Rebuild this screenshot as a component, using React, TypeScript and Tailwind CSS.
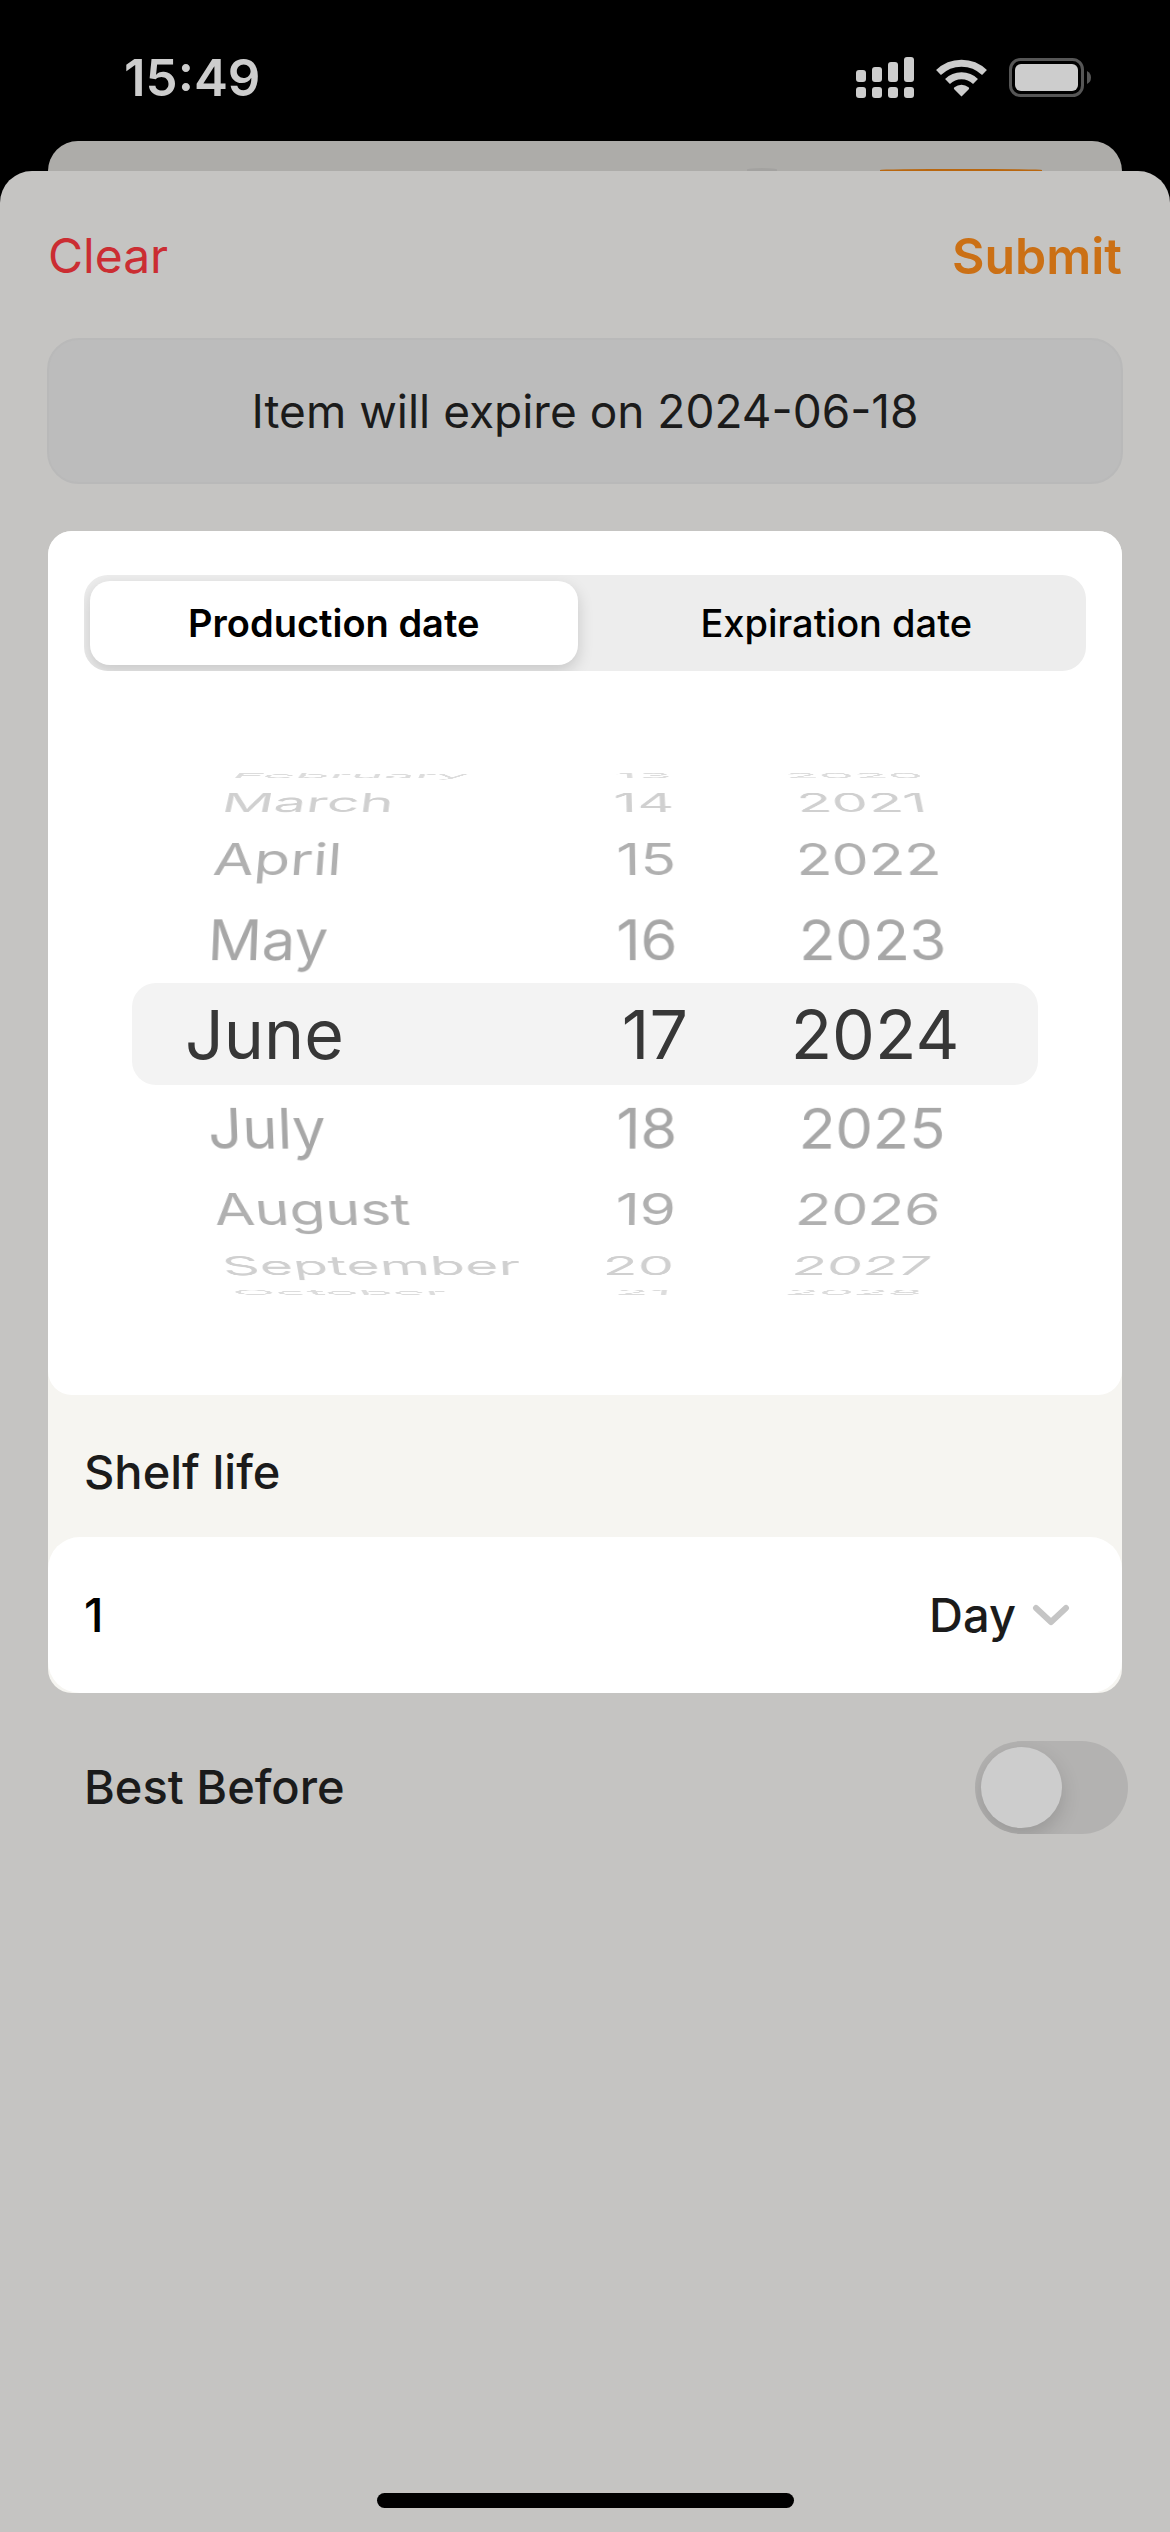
import { useState } from "react";

interface WheelRow {
  step: number;
  month: string;
  day: number;
  year: number;
  tone: string;
}

const ROWS: WheelRow[] = [
  { step: 4, month: "February", day: 13, year: 2020, tone: "text-[#dcdcdc]" },
  { step: 3, month: "March", day: 14, year: 2021, tone: "text-[#d0d0d0]" },
  { step: 2, month: "April", day: 15, year: 2022, tone: "text-[#b0b0b0]" },
  { step: 1, month: "May", day: 16, year: 2023, tone: "text-[#a7a7a7]" },
  { step: -1, month: "July", day: 18, year: 2025, tone: "text-[#a7a7a7]" },
  { step: -2, month: "August", day: 19, year: 2026, tone: "text-[#b0b0b0]" },
  { step: -3, month: "September", day: 20, year: 2027, tone: "text-[#d0d0d0]" },
  { step: -4, month: "October", day: 21, year: 2028, tone: "text-[#dcdcdc]" },
];

const WHEEL_RADIUS = 284;
const STEP_ANGLE = 19.5;

const TABS = ["Production date", "Expiration date"];

function SignalIcon() {
  return (
    <svg className="h-[42px] w-[58px]" viewBox="0 0 58 42" fill="#cdcdcd" aria-hidden="true">
      <rect x="0" y="13" width="10" height="12" rx="3" />
      <rect x="16" y="10" width="10" height="15" rx="3" />
      <rect x="32" y="5" width="10" height="20" rx="3" />
      <rect x="48" y="0" width="10" height="25" rx="3" />
      <rect x="0" y="30" width="10" height="11" rx="3" />
      <rect x="16" y="30" width="10" height="11" rx="3" />
      <rect x="32" y="30" width="10" height="11" rx="3" />
      <rect x="48" y="30" width="10" height="11" rx="3" />
    </svg>
  );
}

function WifiIcon() {
  return (
    <svg className="h-[38px] w-[51px]" viewBox="0 0 51 38" aria-hidden="true">
      <g fill="none" stroke="#cdcdcd" strokeWidth="7">
        <path d="M2.5 13.5 A33 33 0 0 1 48.5 13.5" />
        <path d="M11.5 22.5 A20 20 0 0 1 39.5 22.5" />
      </g>
      <path d="M25.5 37.5 L18 30 Q17.5 29 18.5 28.3 A11 11 0 0 1 32.5 28.3 Q33.5 29 33 30 Z" fill="#cdcdcd" />
    </svg>
  );
}

function BatteryIcon() {
  return (
    <svg className="h-[39px] w-[82px]" viewBox="0 0 82 39" aria-hidden="true">
      <rect x="1.5" y="1.5" width="72" height="36" rx="10" fill="none" stroke="#565656" strokeWidth="3" />
      <rect x="6" y="6" width="63" height="27" rx="6" fill="#cdcdcd" />
      <path d="M78 13 Q82 15 82 19.5 Q82 24 78 26 Z" fill="#565656" />
    </svg>
  );
}

function DateWheel() {
  return (
    <div className="grid h-[724px] place-items-center overflow-hidden pt-0.5 [perspective:3000px]">
      <div className="col-start-1 row-start-1 flex h-[102px] w-full max-w-[906px] items-center rounded-3xl bg-[#f3f3f3] pl-[53px] text-[68px] leading-none text-[#373737]">
        <span className="w-[310px]">June</span>
        <span className="w-[193px] text-right">17</span>
        <span className="ml-[87px] w-[200px] text-center">2024</span>
      </div>
      {/* Rows sit on a cylinder, each turned by the same angle */}
      {ROWS.map(({ step, month, day, year, tone }) => (
        <div
          key={month}
          className={`col-start-1 row-start-1 flex w-full max-w-[906px] items-center pl-[74px] text-[60px] leading-[84px] ${tone}`}
          style={{
            transform: `translateZ(${-WHEEL_RADIUS}px) rotateX(${step * STEP_ANGLE}deg) translateZ(${WHEEL_RADIUS}px)`,
          }}
        >
          <span className="w-[310px]">{month}</span>
          <span className="w-[162px] text-right">{day}</span>
          <span className="ml-24 w-[200px] text-center">{year}</span>
        </div>
      ))}
    </div>
  );
}

export default function App() {
  const [tab, setTab] = useState(0);
  const [amount, setAmount] = useState("1");
  const [bestBefore, setBestBefore] = useState(false);

  return (
    <div className="flex min-h-screen flex-col bg-black font-['Inter',sans-serif] text-[#1b1b1b]">
      {/* Status bar */}
      <div className="flex h-[141px] items-center justify-between pt-3.5 pr-[79px] pl-[124px]">
        <span className="text-[51px] leading-[60px] font-semibold text-[#cdcdcd]">15:49</span>
        <div className="flex items-center gap-[22px]">
          <SignalIcon />
          <WifiIcon />
          <BatteryIcon />
        </div>
      </div>

      {/* Sheet behind */}
      <div className="mx-12 flex h-[30px] items-end justify-end gap-[103px] rounded-t-[30px] bg-[#adaca9] pr-20">
        <div className="h-[3px] w-[30px] rounded-t-[100%] bg-[#a3a2a0]" />
        <div className="h-0.5 w-[162px] rounded-t-[100%] bg-[#b9670f]" />
      </div>

      <main className="flex flex-1 flex-col rounded-t-[32px] bg-[#c5c4c2]">
        <header className="flex h-[167px] items-center justify-between px-12 pt-0.5 leading-[60px]">
          <button className="text-[48px] text-[#cb2d32]">Clear</button>
          <button className="text-[50px] font-semibold text-[#cb7015]">Submit</button>
        </header>

        <p className="mx-[47px] flex h-[146px] items-center justify-center rounded-[32px] border-2 border-[#b9b9b9] bg-[#bcbcbc] text-[46px]">
          Item will expire on 2024-06-18
        </p>

        <div className="mx-12 mt-[47px] overflow-hidden rounded-3xl bg-[#f6f5f1]">
          <section className="rounded-b-3xl bg-white pt-11">
            <div className="mx-9 grid h-24 grid-cols-2 gap-[15px] overflow-hidden rounded-3xl bg-[#ededed] p-1.5">
              {TABS.map((label, i) => (
                <button
                  key={label}
                  onClick={() => setTab(i)}
                  aria-pressed={tab === i}
                  className={`rounded-[20px] text-[38px] text-black ${tab === i ? "bg-white font-semibold shadow-[0_6px_16px_rgba(0,0,0,0.16)]" : "font-medium"}`}
                >
                  {label}
                </button>
              ))}
            </div>
            <DateWheel />
          </section>

          <label htmlFor="shelf-life" className="flex h-[142px] items-center px-9 pt-3 text-[47px] font-medium">
            Shelf life
          </label>

          <div className="flex h-[156px] items-center justify-between rounded-[32px] bg-white pr-[52px] pl-9 text-[47px] font-medium">
            <input
              id="shelf-life"
              inputMode="numeric"
              value={amount}
              onChange={(e) => setAmount(e.target.value)}
              className="w-full min-w-0 flex-1 bg-transparent text-black outline-none"
            />
            <div className="flex items-center gap-4">
              <select aria-label="Shelf life unit" className="appearance-none bg-transparent outline-none [field-sizing:content]">
                <option>Day</option>
                <option>Month</option>
                <option>Year</option>
              </select>
              <svg className="h-[22px] w-[38px]" viewBox="0 0 38 22" fill="none" aria-hidden="true">
                <path d="M4 4 L19 18 L34 4" stroke="#c5c5c5" strokeWidth="6" strokeLinecap="round" strokeLinejoin="round" />
              </svg>
            </div>
          </div>
        </div>

        <div className="mt-12 flex items-center justify-between pr-[42px] pl-[84px]">
          <label htmlFor="best-before" className="text-[47px] font-medium">
            Best Before
          </label>
          <input
            id="best-before"
            type="checkbox"
            role="switch"
            checked={bestBefore}
            onChange={(e) => setBestBefore(e.target.checked)}
            className="flex h-[93px] w-[153px] appearance-none items-center overflow-hidden rounded-full bg-[#b3b2b1] px-1.5 before:size-[81px] before:rounded-full before:bg-[#cdcdcd] before:shadow-[0_8px_20px_rgba(0,0,0,0.15)] checked:justify-end checked:bg-[#cb7015]"
          />
        </div>

        {/* Home indicator */}
        <div className="mx-auto mt-auto mb-6 h-[15px] w-[417px] rounded-full bg-black" />
      </main>
    </div>
  );
}
